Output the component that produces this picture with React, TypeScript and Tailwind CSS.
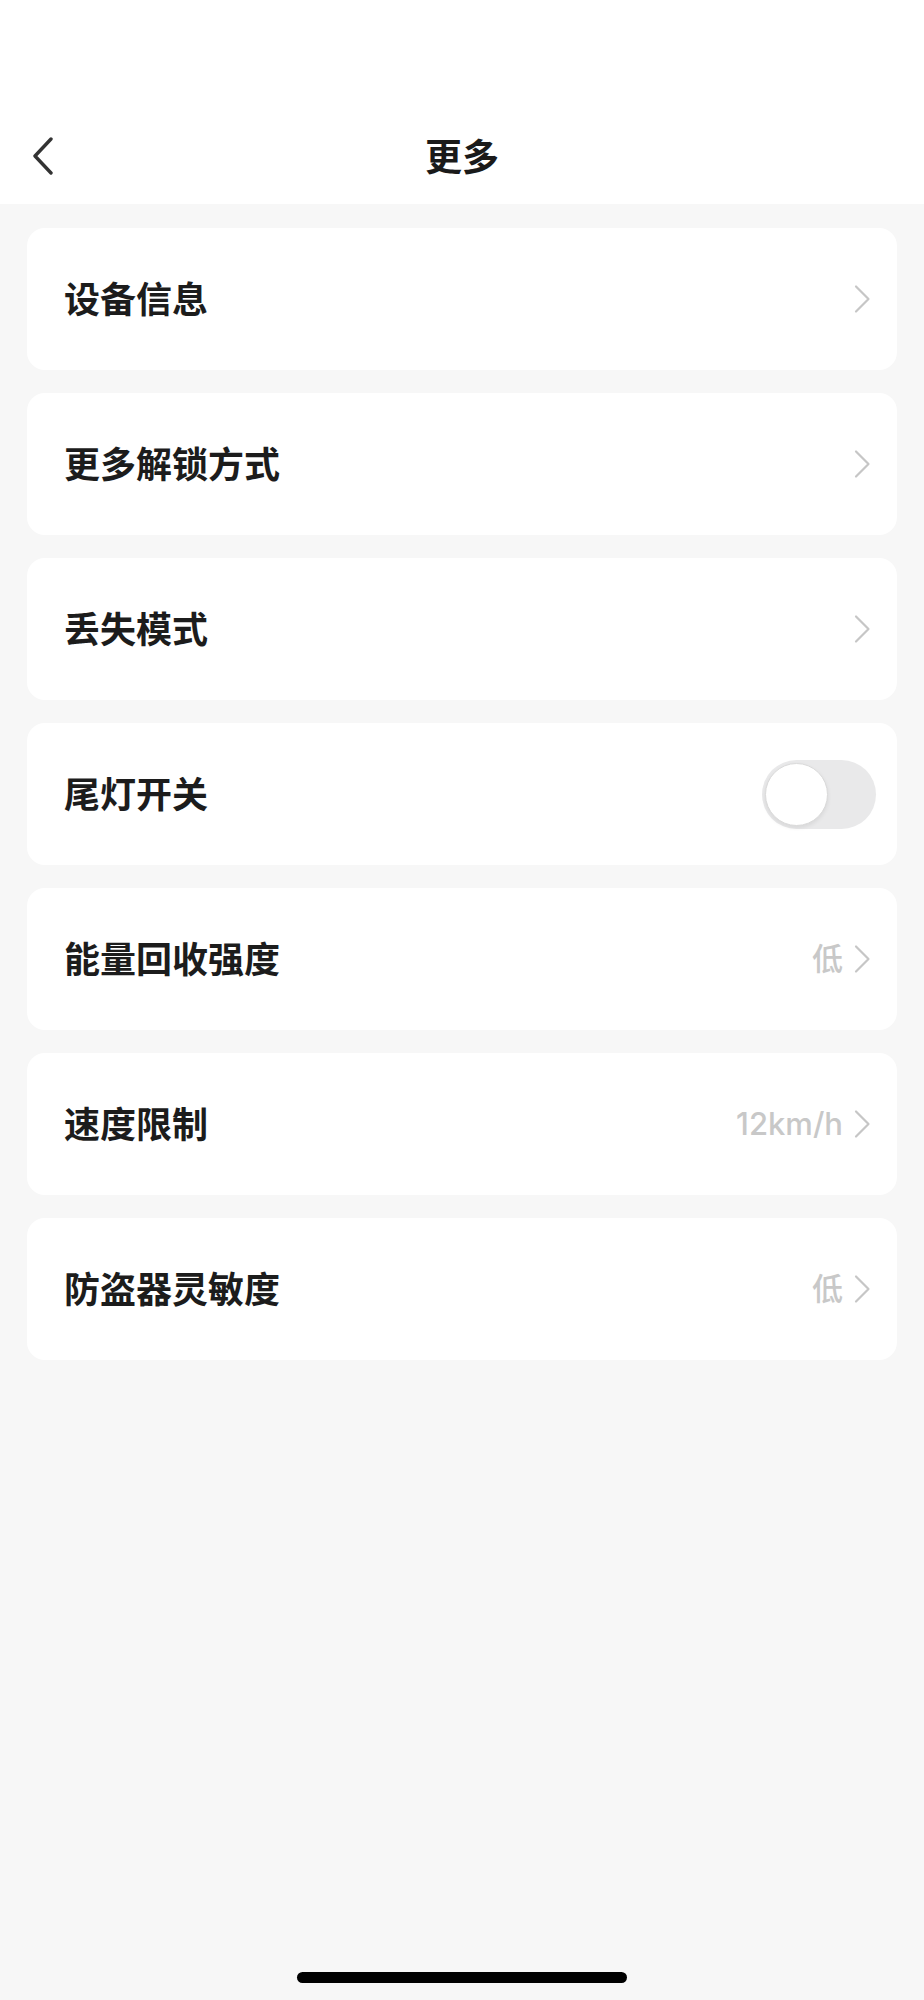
import { useState } from "react";

type Row = {
  label: string;
  value?: string;
  toggle?: boolean;
};

const rows: Row[] = [
  { label: "设备信息" },
  { label: "更多解锁方式" },
  { label: "丢失模式" },
  { label: "尾灯开关", toggle: true },
  { label: "能量回收强度", value: "低" },
  { label: "速度限制", value: "12km/h" },
  { label: "防盗器灵敏度", value: "低" },
];

const cjk = { fontFamily: '"Noto Sans CJK SC", "Noto Sans", sans-serif' };
const valueFont = { fontFamily: 'Inter, "Noto Sans CJK SC", sans-serif' };

const Chevron = () => (
  <svg width="18" height="30" viewBox="0 0 18 30" fill="none" className="shrink-0">
    <path d="M3 2.5 L15.5 15 L3 27.5" stroke="#c6c6c6" strokeWidth="2.2" strokeLinecap="round" strokeLinejoin="round" />
  </svg>
);

const Toggle = () => {
  const [on, setOn] = useState(false);
  return (
    <button
      onClick={() => setOn(!on)}
      className={`w-[114px] h-[69px] rounded-full p-[3px] flex items-center transition-colors ${
        on ? "bg-[#34c759] justify-end" : "bg-[#e9e9ea] justify-start"
      }`}
    >
      <span className="w-[63px] h-[63px] rounded-full bg-white border border-[#dadada] shadow-[0_2px_4px_rgba(0,0,0,0.08)]" />
    </button>
  );
};

export default function App() {
  return (
    <div className="h-[2000px] w-full bg-[#f7f7f7] flex flex-col" style={cjk}>
      <div className="bg-white pt-[108px]">
        <div className="h-[96px] grid grid-cols-[1fr_auto_1fr] items-center">
          <div className="pl-[32px] flex items-center">
            <svg width="22" height="38" viewBox="0 0 22 38" fill="none">
              <path d="M19 2 L3 19 L19 36" stroke="#333333" strokeWidth="3.4" strokeLinecap="round" strokeLinejoin="round" />
            </svg>
          </div>
          <div className="text-[37px] leading-none font-semibold text-[#1a1a1a] pb-[2px]">更多</div>
          <div />
        </div>
      </div>

      <div className="px-[27px] pt-[24px] flex flex-col gap-[23px]">
        {rows.map((r) => (
          <div
            key={r.label}
            className={`h-[142px] rounded-[18px] bg-white pl-[37px] flex items-center justify-between ${
              r.toggle ? "pr-[21px]" : "pr-[26px]"
            }`}
          >
            <span className="text-[36px] leading-none font-semibold text-[#1c1c1c] pb-[5px]">{r.label}</span>
            {r.toggle ? (
              <Toggle />
            ) : (
              <div className="flex items-center gap-[10px]">
                {r.value && (
                  <span className="text-[31px] leading-none font-medium text-[#c8c8c8] pb-[2px]" style={valueFont}>
                    {r.value}
                  </span>
                )}
                <Chevron />
              </div>
            )}
          </div>
        ))}
      </div>

      <div className="mt-auto pb-[17px] flex justify-center">
        <div className="w-[330px] h-[11px] rounded-full bg-black" />
      </div>
    </div>
  );
}
